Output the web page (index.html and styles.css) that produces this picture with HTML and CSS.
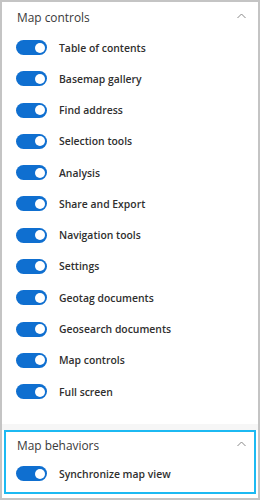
FILE: index.html
```html
<!DOCTYPE html>
<html>
<head>
<meta charset="utf-8">
<link rel="stylesheet" href="styles.css">
</head>
<body>
<div class="frame">
  <section class="panel panel-main">
    <div class="head">
      <span class="title">Map controls</span>
      <svg class="chev" width="9" height="6" viewBox="0 0 9 6"><path d="M0.5 5 L4.5 1 L8.5 5" fill="none" stroke="#888" stroke-width="1"/></svg>
    </div>
    <ul class="list">
      <li class="row"><span class="toggle"><span class="thumb"></span></span><span class="label">Table of contents</span></li>
      <li class="row"><span class="toggle"><span class="thumb"></span></span><span class="label">Basemap gallery</span></li>
      <li class="row"><span class="toggle"><span class="thumb"></span></span><span class="label">Find address</span></li>
      <li class="row"><span class="toggle"><span class="thumb"></span></span><span class="label">Selection tools</span></li>
      <li class="row"><span class="toggle"><span class="thumb"></span></span><span class="label">Analysis</span></li>
      <li class="row"><span class="toggle"><span class="thumb"></span></span><span class="label">Share and Export</span></li>
      <li class="row"><span class="toggle"><span class="thumb"></span></span><span class="label">Navigation tools</span></li>
      <li class="row"><span class="toggle"><span class="thumb"></span></span><span class="label">Settings</span></li>
      <li class="row"><span class="toggle"><span class="thumb"></span></span><span class="label">Geotag documents</span></li>
      <li class="row"><span class="toggle"><span class="thumb"></span></span><span class="label">Geosearch documents</span></li>
      <li class="row"><span class="toggle"><span class="thumb"></span></span><span class="label">Map controls</span></li>
      <li class="row"><span class="toggle"><span class="thumb"></span></span><span class="label">Full screen</span></li>
    </ul>
  </section>
  <div class="band"></div>
  <section class="panel panel-focus">
    <div class="head">
      <span class="title">Map behaviors</span>
      <svg class="chev" width="9" height="6" viewBox="0 0 9 6"><path d="M0.5 5 L4.5 1 L8.5 5" fill="none" stroke="#888" stroke-width="1"/></svg>
    </div>
    <ul class="list">
      <li class="row"><span class="toggle"><span class="thumb"></span></span><span class="label">Synchronize map view</span></li>
    </ul>
  </section>
</div>
</body>
</html>
```
FILE: styles.css
```css
html, body {
  margin: 0;
  padding: 0;
  background: #ffffff;
}
body {
  font-family: "Open Sans", "Noto Sans", sans-serif;
  color: #323232;
}
.frame {
  box-sizing: border-box;
  width: 260px;
  height: 500px;
  border: 2px solid #c4c4c4;
  display: flex;
  flex-direction: column;
  background: #fff;
}
.panel-main {
  height: 422px;
  box-sizing: border-box;
  padding: 0 12px 0 15px;
}
.band {
  height: 6px;
  background: #f6f6f6;
}
.panel-focus {
  box-sizing: border-box;
  margin: 0 2px;
  height: 64px;
  border: 2px solid #1cb9f2;
  padding: 0 8px 0 11px;
}
.head {
  display: flex;
  align-items: center;
  justify-content: space-between;
  height: 30px;
}
.panel-focus .head {
  height: 26px;
}
.title {
  font-size: 11.9px;
  font-weight: 400;
  color: #3a3a3a;
}
.chev {
  display: block;
  margin-top: -2px;
}
.list {
  list-style: none;
  margin: 0;
  padding: 0;
}
.row {
  display: flex;
  align-items: center;
  height: 31.27px;
}
.toggle {
  box-sizing: border-box;
  width: 31px;
  height: 15px;
  border-radius: 8px;
  background: #0f6fd0;
  display: flex;
  align-items: center;
  justify-content: flex-end;
  padding-right: 2.5px;
  margin-left: -1px;
  flex: none;
}
.thumb {
  width: 10px;
  height: 10px;
  border-radius: 50%;
  background: #fff;
}
.label {
  margin-left: 12px;
  font-size: 10.4px;
  font-weight: 600;
  color: #2f2f2f;
}
```
